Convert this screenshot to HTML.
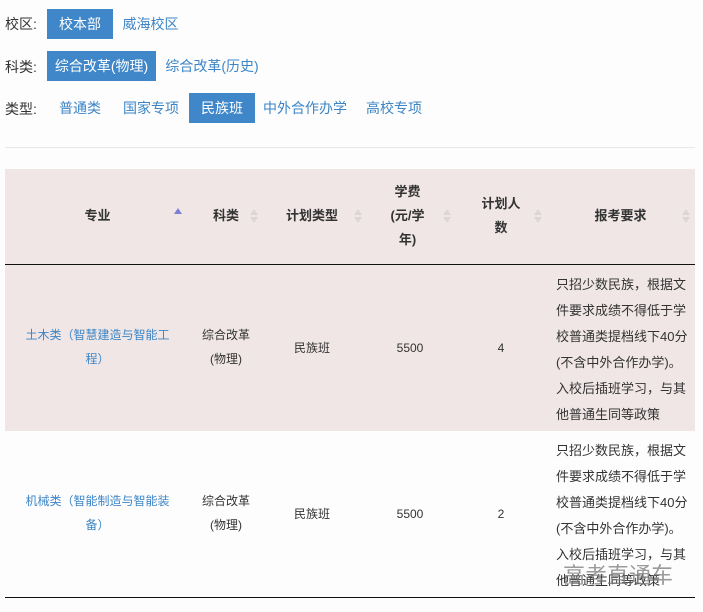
<!DOCTYPE html>
<html><head><meta charset="utf-8"><style>
*{margin:0;padding:0;box-sizing:border-box}
body{width:703px;height:612px;background:#fdfdfd;font-family:"Liberation Sans","Noto Sans CJK SC",sans-serif;position:relative;overflow:hidden;color:#333}
.a{position:absolute;white-space:nowrap}
.lab{font-size:14px;color:#333}
.btn{position:absolute;height:30px;line-height:30px;font-size:14px;color:#3d85c6;text-align:center}
.on{background:#3f87c9;color:#fff}
.hd{position:absolute;font-size:13px;font-weight:bold;color:#333;text-align:center;line-height:24px}
.c{position:absolute;font-size:12px;text-align:center;line-height:24px;color:#333}
.s{position:absolute;width:0;height:0;border-left:4px solid transparent;border-right:4px solid transparent}
.up{border-bottom:6px solid #dcd6d6}.dn{border-top:6px solid #dcd6d6}
.req{position:absolute;left:556px;font-size:13px;line-height:26px;color:#333;white-space:nowrap}
</style></head><body>
<div class="a lab" style="left:5px;top:14px">校区:</div>
<div class="btn on" style="left:47px;top:9px;width:66px">校本部</div>
<div class="btn" style="left:113px;top:9px;width:75px">威海校区</div>
<div class="a lab" style="left:5px;top:57px">科类:</div>
<div class="btn on" style="left:47px;top:51px;width:109px">综合改革(物理)</div>
<div class="btn" style="left:156px;top:51px;width:112px">综合改革(历史)</div>
<div class="a lab" style="left:5px;top:99px">类型:</div>
<div class="btn" style="left:47px;top:93px;width:66px">普通类</div>
<div class="btn" style="left:113px;top:93px;width:76px">国家专项</div>
<div class="btn on" style="left:189px;top:93px;width:66px">民族班</div>
<div class="btn" style="left:255px;top:93px;width:100px">中外合作办学</div>
<div class="btn" style="left:355px;top:93px;width:78px">高校专项</div>
<div class="a" style="left:5px;top:147px;width:690px;height:1px;background:#e8e8e8"></div>

<div class="a" style="left:5px;top:169px;width:690px;height:95px;background:#efe6e5"></div>
<div class="a" style="left:5px;top:264px;width:690px;height:1px;background:#111"></div>
<div class="a" style="left:5px;top:265px;width:690px;height:166px;background:#efe6e5"></div>
<div class="a" style="left:5px;top:597px;width:690px;height:1px;background:#111"></div>

<div class="hd" style="left:5px;width:185px;top:204px">专业</div>
<div class="s" style="left:174px;top:208px;border-bottom:6px solid #7b7fd6"></div>
<div class="hd" style="left:190px;width:72px;top:204px">科类</div>
<div class="s up" style="left:250px;top:209px"></div><div class="s dn" style="left:250px;top:217px"></div>
<div class="hd" style="left:262px;width:100px;top:204px">计划类型</div>
<div class="s up" style="left:354px;top:209px"></div><div class="s dn" style="left:354px;top:217px"></div>
<div class="hd" style="left:370px;width:75px;top:180px">学费<br>(元/学<br>年)</div>
<div class="s up" style="left:443px;top:209px"></div><div class="s dn" style="left:443px;top:217px"></div>
<div class="hd" style="left:465px;width:72px;top:192px">计划人<br>数</div>
<div class="s up" style="left:534px;top:209px"></div><div class="s dn" style="left:534px;top:217px"></div>
<div class="hd" style="left:548px;width:145px;top:204px">报考要求</div>
<div class="s up" style="left:682px;top:209px"></div><div class="s dn" style="left:682px;top:217px"></div>

<div class="c" style="left:10px;width:175px;top:323px;color:#3d85c6">土木类（智慧建造与智能工<br>程）</div>
<div class="c" style="left:190px;width:72px;top:323px">综合改革<br>(物理)</div>
<div class="c" style="left:262px;width:100px;top:336px">民族班</div>
<div class="c" style="left:370px;width:80px;top:336px">5500</div>
<div class="c" style="left:465px;width:72px;top:336px">4</div>
<div class="req" style="top:272px">只招少数民族，根据文<br>件要求成绩不得低于学<br>校普通类提档线下40分<br>(不含中外合作办学)。<br>入校后插班学习，与其<br>他普通生同等政策</div>

<div class="c" style="left:10px;width:175px;top:489px;color:#3d85c6">机械类（智能制造与智能装<br>备）</div>
<div class="c" style="left:190px;width:72px;top:489px">综合改革<br>(物理)</div>
<div class="c" style="left:262px;width:100px;top:502px">民族班</div>
<div class="c" style="left:370px;width:80px;top:502px">5500</div>
<div class="c" style="left:465px;width:72px;top:502px">2</div>
<div class="req" style="top:438px">只招少数民族，根据文<br>件要求成绩不得低于学<br>校普通类提档线下40分<br>(不含中外合作办学)。<br>入校后插班学习，与其<br>他普通生同等政策</div>
<div class="a" style="left:563px;top:558px;font-size:22px;color:rgba(120,120,120,0.75)">高考直通车</div>
</body></html>
